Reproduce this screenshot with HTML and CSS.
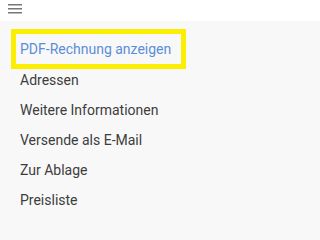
FILE: index.html
```html
<!DOCTYPE html>
<html>
<head>
<meta charset="utf-8">
<link rel="stylesheet" href="styles.css">
</head>
<body>
<header class="topbar">
  <svg class="hamburger" width="14" height="10" viewBox="0 0 14 10">
    <rect x="0" y="0" width="14" height="1.5" fill="#777"/>
    <rect x="0" y="4" width="14" height="1.5" fill="#777"/>
    <rect x="0" y="8" width="14" height="1.5" fill="#777"/>
  </svg>
</header>
<nav class="menu">
  <ul class="menu-list">
    <li class="menu-item active">PDF-Rechnung anzeigen</li>
    <li class="menu-item">Adressen</li>
    <li class="menu-item">Weitere Informationen</li>
    <li class="menu-item">Versende als E-Mail</li>
    <li class="menu-item">Zur Ablage</li>
    <li class="menu-item">Preisliste</li>
  </ul>
</nav>
</body>
</html>
```
FILE: styles.css
```css
html, body {
  margin: 0;
  padding: 0;
}
body {
  min-height: 100vh;
  background: #f8f8f8;
  font-family: Roboto, "Liberation Sans", sans-serif;
  overflow: hidden;
}
.topbar {
  height: 21px;
  background: #ffffff;
  display: flex;
  align-items: flex-start;
  padding-left: 8px;
  box-sizing: border-box;
}
.hamburger {
  display: block;
  margin-top: 4px;
}
.menu {
  padding: 13px 0 0 16px;
}
.menu-list {
  list-style: none;
  margin: 0;
  padding: 0;
  width: 165px;
}
.menu-item {
  height: 30px;
  line-height: 30px;
  padding-left: 4px;
  font-size: 14px;
  color: #3d3d3d;
  white-space: nowrap;
}
.menu-item.active {
  color: #5a8ed8;
  outline: 5px solid #fcee00;
  margin-bottom: 1px;
}
```
